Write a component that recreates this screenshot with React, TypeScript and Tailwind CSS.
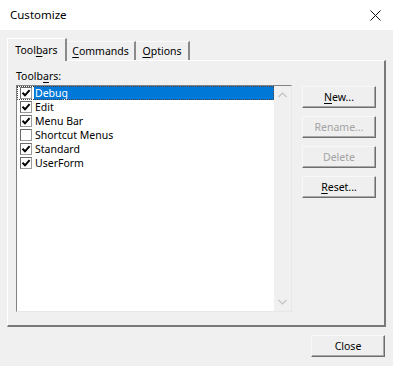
import React from 'react';

const font = { fontFamily: '"Noto Sans", "DejaVu Sans", sans-serif' };

type Item = { name: string; checked: boolean };

const items: Item[] = [
  { name: 'Debug', checked: true },
  { name: 'Edit', checked: true },
  { name: 'Menu Bar', checked: true },
  { name: 'Shortcut Menus', checked: false },
  { name: 'Standard', checked: true },
  { name: 'UserForm', checked: true },
];

function CheckBox({ checked }: { checked: boolean }) {
  return (
    <div className="w-[12px] h-[12px] border border-t-[#6a6a6a] border-l-[#6a6a6a] border-r-[#9a9a9a] border-b-[#9a9a9a] bg-white flex items-center justify-center shrink-0">
      {checked && (
        <svg width="10" height="10" viewBox="0 0 10 10">
          <path d="M1.5 4.8 L4 7.3 L8.6 2.2" fill="none" stroke="#000" strokeWidth="2" />
        </svg>
      )}
    </div>
  );
}

function Button({ label, accent, disabled }: { label: string; accent?: number; disabled?: boolean }) {
  const before = accent === undefined ? label : label.slice(0, accent);
  const key = accent === undefined ? '' : label[accent];
  const after = accent === undefined ? '' : label.slice(accent + 1);
  return (
    <div
      className={`w-[74px] h-[22px] flex items-center justify-center text-[10.5px] leading-[14px] bg-[#efefef] border border-t-[#f8f8f8] border-l-[#f8f8f8] border-r-[#6e6e6e] border-b-[#6e6e6e] shadow-[inset_-1px_-1px_0_#a8a8a8] ${
        disabled ? 'text-[#a3a3a3]' : 'text-black'
      }`}
    >
      {before}
      {key && <span className="underline underline-offset-2">{key}</span>}
      {after}
    </div>
  );
}

export default function App() {
  return (
    <div className="w-[393px] h-[366px] bg-[#f0f0f0] flex flex-col text-black" style={font}>
      {/* title bar */}
      <div className="h-[30px] bg-white flex items-center justify-between pl-[10px] pr-[12px] shrink-0">
        <span className="text-[11.5px]">Customize</span>
        <svg width="11" height="11" viewBox="0 0 11 11">
          <path d="M0.5 0.5 L10.5 10.5 M10.5 0.5 L0.5 10.5" stroke="#111" strokeWidth="1" />
        </svg>
      </div>

      <div className="flex flex-col px-[7px] pt-[8px]">
        {/* tabs */}
        <div className="flex items-end h-[23px] relative z-10 -mb-px text-[10.5px] leading-[14px]">
          <div className="w-[60px] h-[23px] bg-[#f0f0f0] border-l border-t border-white border-r-2 border-r-[#8a8a8a] flex justify-center pt-[4px]">
            <span>
              Tool<span className="underline underline-offset-2">b</span>ars
            </span>
          </div>
          <div className="w-[69px] h-[19px] mb-px border-t border-t-[#fafafa] border-r-2 border-r-[#8a8a8a] flex justify-center pt-[2px]">
            <span>
              <span className="underline underline-offset-2">C</span>ommands
            </span>
          </div>
          <div className="w-[54px] h-[19px] mb-px border-t border-t-[#fafafa] border-r-2 border-r-[#8a8a8a] flex justify-center pt-[2px]">
            <span>
              <span className="underline underline-offset-2">O</span>ptions
            </span>
          </div>
        </div>

        {/* panel */}
        <div className="w-[379px] h-[267px] border-l border-t border-white border-r-2 border-b-2 border-r-[#7a7a7a] border-b-[#7a7a7a] pl-[8px] pt-[8px] flex flex-col">
          <div className="text-[10.5px] h-[14px] leading-[14px]">
            Toolb<span className="underline underline-offset-2">a</span>rs:
          </div>
          <div className="flex mt-[2px]">
            {/* list box */}
            <div className="w-[276px] h-[227px] bg-white border border-t-[#828282] border-l-[#828282] border-r-[#e8e8e8] border-b-[#e8e8e8] flex">
              <div className="flex-1 flex flex-col">
                {items.map((it, i) => (
                  <div
                    key={it.name}
                    className={`h-[14px] flex items-center pl-[3px] text-[10.5px] leading-[14px] ${
                      i === 0 ? 'outline-1 outline-dotted outline-[#444] -outline-offset-1' : ''
                    }`}
                  >
                    <CheckBox checked={it.checked} />
                    <div
                      className={`ml-[2px] h-[14px] flex-1 flex items-center pl-[1px] ${
                        i === 0 ? 'bg-[#0078d7] text-white' : ''
                      }`}
                    >
                      {it.name}
                    </div>
                  </div>
                ))}
              </div>
              <div className="w-[17px] bg-[#f0f0f0] flex flex-col justify-between items-center py-[6px]">
                <svg width="9" height="6" viewBox="0 0 9 6">
                  <path d="M0.5 5 L4.5 1 L8.5 5" fill="none" stroke="#c2c2c2" strokeWidth="1.2" />
                </svg>
                <svg width="9" height="6" viewBox="0 0 9 6">
                  <path d="M0.5 1 L4.5 5 L8.5 1" fill="none" stroke="#c2c2c2" strokeWidth="1.2" />
                </svg>
              </div>
            </div>

            {/* buttons */}
            <div className="ml-[10px] mt-px flex flex-col gap-[8px]">
              <Button label="New..." accent={0} />
              <Button label="Rename..." disabled />
              <Button label="Delete" disabled />
              <Button label="Reset..." accent={0} />
            </div>
          </div>
        </div>

        <div className="flex justify-end mt-[8px] pr-[1px]">
          <Button label="Close" />
        </div>
      </div>
    </div>
  );
}
